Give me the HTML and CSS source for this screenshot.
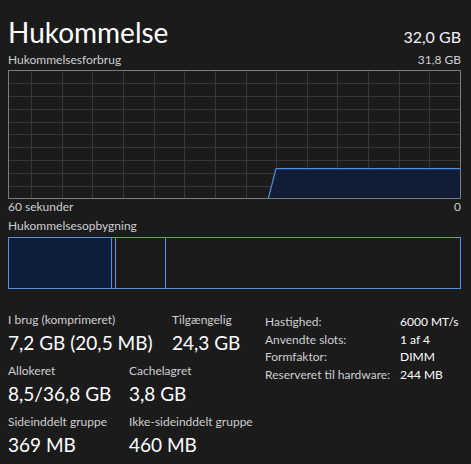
FILE: index.html
```html
<!DOCTYPE html>
<html lang="da">
<head>
<meta charset="utf-8">
<title>Hukommelse</title>
<link rel="stylesheet" href="styles.css">
</head>
<body>
<div class="page">
  <div class="header">
    <div class="title">Hukommelse</div>
    <div class="total">32,0 GB</div>
  </div>
  <div class="caption">
    <span>Hukommelsesforbrug</span>
    <span>31,8 GB</span>
  </div>
  <svg class="graph" width="453" height="129" viewBox="0 0 453 129">
    <g stroke="#373737" stroke-width="1">
      <line x1="23.5" y1="0" x2="23.5" y2="129"/>
      <line x1="54.5" y1="0" x2="54.5" y2="129"/>
      <line x1="84.5" y1="0" x2="84.5" y2="129"/>
      <line x1="115.5" y1="0" x2="115.5" y2="129"/>
      <line x1="146.5" y1="0" x2="146.5" y2="129"/>
      <line x1="176.5" y1="0" x2="176.5" y2="129"/>
      <line x1="207.5" y1="0" x2="207.5" y2="129"/>
      <line x1="238.5" y1="0" x2="238.5" y2="129"/>
      <line x1="268.5" y1="0" x2="268.5" y2="129"/>
      <line x1="299.5" y1="0" x2="299.5" y2="129"/>
      <line x1="329.5" y1="0" x2="329.5" y2="129"/>
      <line x1="360.5" y1="0" x2="360.5" y2="129"/>
      <line x1="391.5" y1="0" x2="391.5" y2="129"/>
      <line x1="421.5" y1="0" x2="421.5" y2="129"/>
      <line x1="0" y1="13.5" x2="453" y2="13.5"/>
      <line x1="0" y1="26.5" x2="453" y2="26.5"/>
      <line x1="0" y1="39.5" x2="453" y2="39.5"/>
      <line x1="0" y1="52.5" x2="453" y2="52.5"/>
      <line x1="0" y1="64.5" x2="453" y2="64.5"/>
      <line x1="0" y1="77.5" x2="453" y2="77.5"/>
      <line x1="0" y1="90.5" x2="453" y2="90.5"/>
      <line x1="0" y1="103.5" x2="453" y2="103.5"/>
      <line x1="0" y1="116.5" x2="453" y2="116.5"/>
    </g>
    <polygon points="260.3,128.5 268,98.7 452.5,98.7 452.5,128.5" fill="#0e1d3a" fill-opacity="0.92"/>
    <polyline points="260.3,128.5 268,98.7 452.5,98.7" fill="none" stroke="#4f8fe3" stroke-width="1.2"/>
    <rect x="0.5" y="0.5" width="452" height="128" fill="none" stroke="#7c7c7c" stroke-width="1"/>
  </svg>
  <div class="caption axis">
    <span>60 sekunder</span>
    <span>0</span>
  </div>
  <div class="caption section">
    <span>Hukommelsesopbygning</span>
  </div>
  <div class="comp">
    <div class="seg seg-inuse"></div>
    <div class="seg seg-mod"></div>
    <div class="seg seg-standby"></div>
    <div class="seg seg-free"></div>
  </div>
  <div class="stats">
    <div class="left">
      <div class="row">
        <div class="stat first-wide">
          <div class="label">I brug (komprimeret)</div>
          <div class="value">7,2 GB (20,5 MB)</div>
        </div>
        <div class="stat">
          <div class="label">Tilgængelig</div>
          <div class="value">24,3 GB</div>
        </div>
      </div>
      <div class="row">
        <div class="stat col1">
          <div class="label">Allokeret</div>
          <div class="value">8,5/36,8 GB</div>
        </div>
        <div class="stat">
          <div class="label">Cachelagret</div>
          <div class="value">3,8 GB</div>
        </div>
      </div>
      <div class="row">
        <div class="stat col1">
          <div class="label">Sideinddelt gruppe</div>
          <div class="value">369 MB</div>
        </div>
        <div class="stat">
          <div class="label">Ikke-sideinddelt gruppe</div>
          <div class="value">460 MB</div>
        </div>
      </div>
    </div>
    <div class="right">
      <div class="kv"><span class="k">Hastighed:</span><span class="v">6000 MT/s</span></div>
      <div class="kv"><span class="k">Anvendte slots:</span><span class="v">1 af 4</span></div>
      <div class="kv"><span class="k">Formfaktor:</span><span class="v">DIMM</span></div>
      <div class="kv"><span class="k">Reserveret til hardware:</span><span class="v">244 MB</span></div>
    </div>
  </div>
</div>
</body>
</html>
```
FILE: styles.css
```css
html, body {
  margin: 0;
  padding: 0;
  background: #1b1b1b;
}
body {
  font-family: Lato, "Open Sans", sans-serif;
  color: #ffffff;
  width: 471px;
  height: 464px;
  overflow: hidden;
}
.page {
  padding: 15px 10px 0 8px;
}
.header {
  display: flex;
  justify-content: space-between;
  align-items: baseline;
  height: 34px;
}
.title {
  font-size: 28px;
  line-height: 34px;
  color: #ffffff;
}
.total {
  font-size: 16px;
  line-height: 34px;
  color: #f2f2f2;
}
.caption {
  display: flex;
  justify-content: space-between;
  font-size: 12px;
  line-height: 16px;
  color: #cfcfcf;
  margin-top: 3px;
  height: 16px;
}
.graph {
  display: block;
  margin-top: 2px;
}
.caption.axis {
  margin-top: 0;
}
.caption.section {
  margin-top: 3px;
}
.comp {
  display: flex;
  height: 50px;
  margin-top: 3px;
  border: 1px solid #5a92dc;
}
.seg {
  border-right: 1px solid #5a92dc;
}
.seg-inuse {
  width: 102px;
  background: #0e1d3a;
}
.seg-mod {
  width: 3px;
}
.seg-standby {
  width: 49px;
}
.seg-free {
  flex: 1;
  border-right: none;
}
.stats {
  display: flex;
  margin-top: 23px;
}
.left {
  width: 257px;
  display: flex;
  flex-direction: column;
  gap: 7px;
}
.row {
  display: flex;
}
.first-wide {
  width: 164px;
}
.col1 {
  width: 121px;
}
.label {
  font-size: 12px;
  line-height: 16px;
  color: #cfcfcf;
}
.value {
  font-size: 19px;
  line-height: 26px;
  margin-top: 2px;
  color: #ffffff;
  white-space: nowrap;
}
.right {
  display: flex;
  flex-direction: column;
  padding-top: 1px;
}
.kv {
  display: flex;
  font-size: 12px;
  line-height: 17.7px;
}
.k {
  width: 135px;
  color: #cfcfcf;
}
.v {
  color: #ffffff;
}
```
